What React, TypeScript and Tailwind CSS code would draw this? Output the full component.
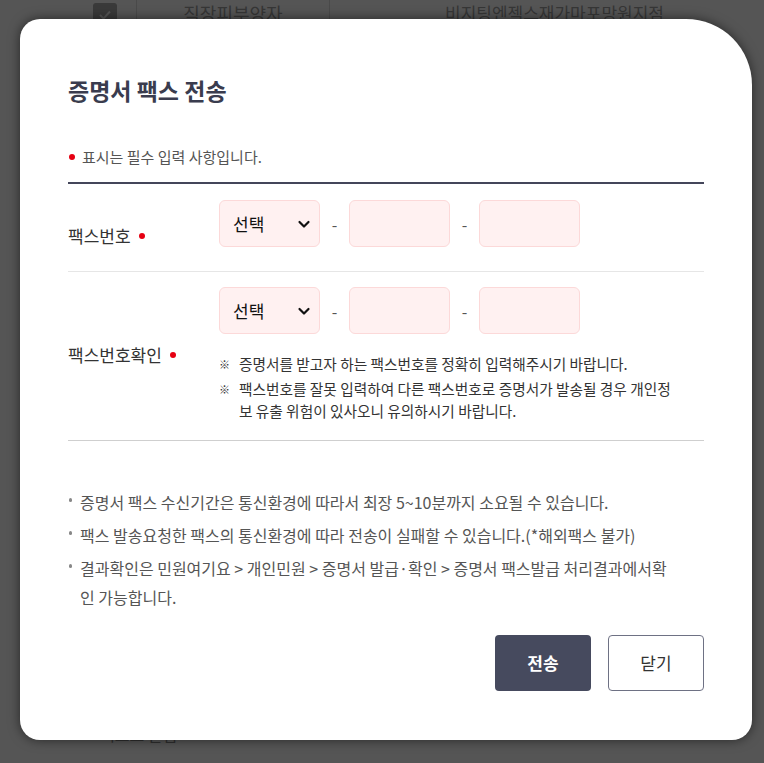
import React from 'react';

const FONT = { fontFamily: '"Noto Sans CJK KR", "Noto Sans", sans-serif' };

const Dot = () => <span className="inline-block w-[6px] h-[6px] rounded-full bg-[#e60012]"></span>;

const SelectBox = () => (
  <div className="w-[101px] h-[47px] rounded-[6px] border border-[#fcd9d9] bg-[#fff1f1] flex items-center justify-between pl-[13px] pr-[8px]">
    <span className="text-[17px] text-[#111] leading-[24px]">선택</span>
    <svg width="14" height="14" viewBox="0 0 14 14" fill="none">
      <polyline points="2.5,5 7,9.5 11.5,5" stroke="#111" strokeWidth="2.2" strokeLinecap="round" strokeLinejoin="round" />
    </svg>
  </div>
);

const InputBox = () => (
  <div className="w-[101px] h-[47px] rounded-[6px] border border-[#fcd9d9] bg-[#fff1f1]"></div>
);

const Dash = () => <span className="w-[29px] text-center text-[16px] text-[#555]">-</span>;

const PhoneRow = () => (
  <div className="flex items-center">
    <SelectBox />
    <Dash />
    <InputBox />
    <Dash />
    <InputBox />
  </div>
);

const Bullet = () => (
  <span className="w-[12px] shrink-0 pt-[10px] pl-[1px]">
    <span className="block w-[3px] h-[4px] rounded-full bg-[#888]"></span>
  </span>
);

export default function App() {
  return (
    <div className="relative w-full h-[763px] bg-[#555555] overflow-hidden" style={FONT}>
      {/* dimmed page behind */}
      <div className="flex h-[30px] text-[18px] text-[#363636]">
        <div className="w-[137px] border-r border-[#4a4a4a] flex justify-end pr-[19px] pt-[3px]">
          <div className="w-[24px] h-[24px] rounded-[3px] bg-[#3a3a3a] flex items-center justify-center">
            <svg width="14" height="14" viewBox="0 0 14 14" fill="none">
              <polyline points="2,7 5.5,10.5 12,3.5" stroke="#555" strokeWidth="2" />
            </svg>
          </div>
        </div>
        <div className="w-[193px] border-r border-[#4a4a4a] flex justify-center pt-[1px] leading-[24px]">직장피부양자</div>
        <div className="flex-1 pl-[115px] pt-[1px] leading-[24px] text-[17px]">비지팅엔젝스재가마포망원지점</div>
      </div>
      <div className="flex items-center gap-[10px] pl-[78px] mt-[692px] text-[16px] text-[#2f2f2f]">
        <span className="w-[12px] h-[12px] rounded-full bg-[#4a2222]"></span>
        <span>텍스트 알림</span>
      </div>

      {/* modal */}
      <div className="absolute left-[20px] top-[19px] w-[732px] h-[721px] bg-white rounded-tl-[20px] rounded-tr-[66px] rounded-b-[20px] shadow-[0_0_12px_rgba(0,0,0,0.55)] px-[48px] pt-[55px]">
        <h2 className="text-[23px] font-bold text-[#3a3c4e] leading-[32px]">증명서 팩스 전송</h2>

        <div className="mt-[41px] flex items-center gap-[7px] text-[15px] text-[#555] leading-[20px] pl-[1px]">
          <Dot />
          <span>표시는 필수 입력 사항입니다.</span>
        </div>

        <div className="mt-[15px] border-t-2 border-[#44465a]">
          <div className="flex items-start h-[88px] pt-[16px] border-b border-[#e6e6e6]">
            <div className="w-[151px] mt-[24px] flex items-center gap-[8px] text-[17px] leading-[24px] text-[#333]">
              <span>팩스번호</span>
              <Dot />
            </div>
            <PhoneRow />
          </div>

          <div className="flex items-center border-b border-[#cfcfcf] pt-[15px] pb-[18px]">
            <div className="w-[151px] flex items-center gap-[8px] text-[17px] leading-[24px] text-[#333]">
              <span>팩스번호확인</span>
              <Dot />
            </div>
            <div className="flex flex-col">
              <PhoneRow />
              <ul className="mt-[19px] flex flex-col gap-[3px] text-[14.7px] leading-[22px] text-[#333]">
                <li className="flex">
                  <span className="w-[20px] shrink-0 text-[11px]">※</span>
                  <span>증명서를 받고자 하는 팩스번호를 정확히 입력해주시기 바랍니다.</span>
                </li>
                <li className="flex">
                  <span className="w-[20px] shrink-0 text-[11px]">※</span>
                  <span className="w-[442px]">팩스번호를 잘못 입력하여 다른 팩스번호로 증명서가 발송될 경우 개인정보 유출 위험이 있사오니 유의하시기 바랍니다.</span>
                </li>
              </ul>
            </div>
          </div>
        </div>

        <ul className="mt-[47px] flex flex-col gap-[4px] text-[16px] text-[#555] leading-[29px]">
          <li className="flex">
            <Bullet />
            <span>증명서 팩스 수신기간은 통신환경에 따라서 최장 5~10분까지 소요될 수 있습니다.</span>
          </li>
          <li className="flex">
            <Bullet />
            <span>팩스 발송요청한 팩스의 통신환경에 따라 전송이 실패할 수 있습니다.(*해외팩스 불가)</span>
          </li>
          <li className="flex">
            <Bullet />
            <span className="w-[598px]">결과확인은 민원여기요 &gt; 개인민원 &gt; 증명서 발급·확인 &gt; 증명서 팩스발급 처리결과에서확인 가능합니다.</span>
          </li>
        </ul>

        <div className="mt-[23px] flex justify-end gap-[17px]">
          <button className="w-[96px] h-[56px] rounded-[4px] bg-[#464a5e] text-white text-[17px] font-bold">전송</button>
          <button className="w-[96px] h-[56px] rounded-[4px] border border-[#6e7184] bg-white text-[#333] text-[17px]">닫기</button>
        </div>
      </div>
    </div>
  );
}
